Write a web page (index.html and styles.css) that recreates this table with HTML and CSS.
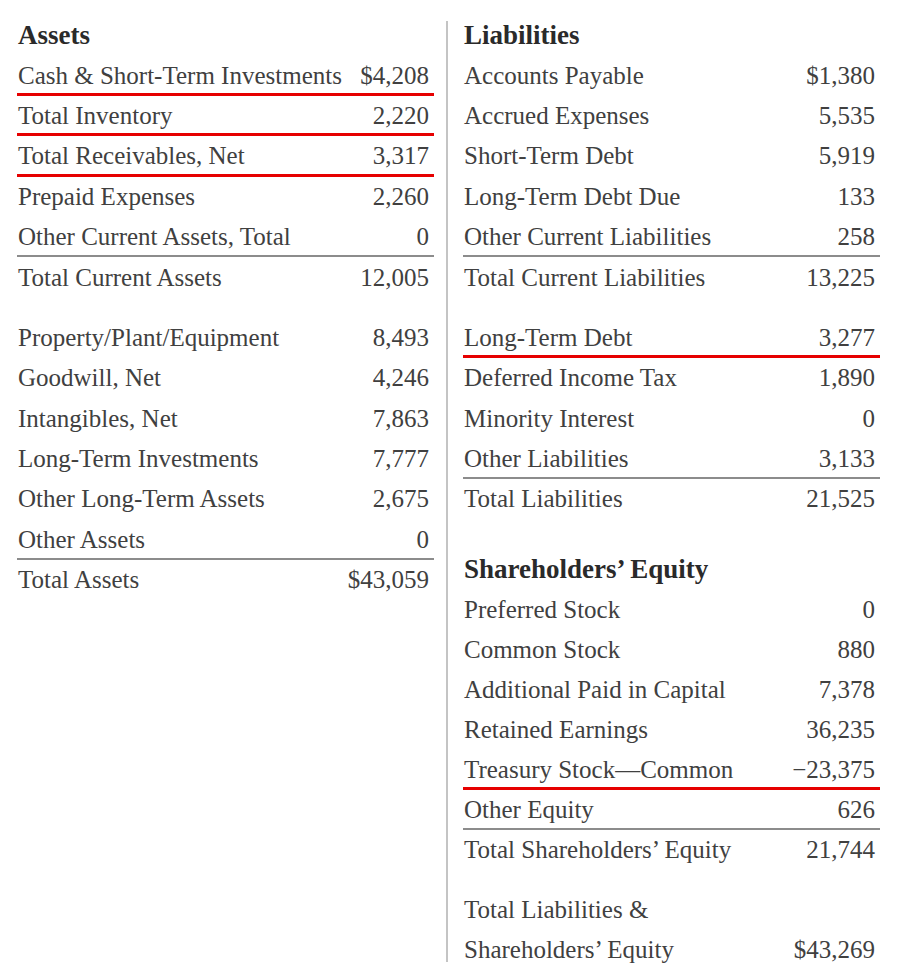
FILE: index.html
```html
<!DOCTYPE html>
<html lang="en">
<head>
<meta charset="utf-8">
<title>Balance Sheet</title>
<link rel="stylesheet" href="styles.css">
</head>
<body>
<main class="sheet">
  <section class="col">
    <div class="row head">Assets</div>
    <div class="row red"><span class="label">Cash &amp; Short-Term Investments</span><span class="amt">$4,208</span></div>
    <div class="row red"><span class="label">Total Inventory</span><span class="amt">2,220</span></div>
    <div class="row red"><span class="label">Total Receivables, Net</span><span class="amt">3,317</span></div>
    <div class="row"><span class="label">Prepaid Expenses</span><span class="amt">2,260</span></div>
    <div class="row rule"><span class="label">Other Current Assets, Total</span><span class="amt">0</span></div>
    <div class="row"><span class="label">Total Current Assets</span><span class="amt">12,005</span></div>
    <div class="spacer"></div>
    <div class="row"><span class="label">Property/Plant/Equipment</span><span class="amt">8,493</span></div>
    <div class="row"><span class="label">Goodwill, Net</span><span class="amt">4,246</span></div>
    <div class="row"><span class="label">Intangibles, Net</span><span class="amt">7,863</span></div>
    <div class="row"><span class="label">Long-Term Investments</span><span class="amt">7,777</span></div>
    <div class="row"><span class="label">Other Long-Term Assets</span><span class="amt">2,675</span></div>
    <div class="row rule"><span class="label">Other Assets</span><span class="amt">0</span></div>
    <div class="row"><span class="label">Total Assets</span><span class="amt">$43,059</span></div>
  </section>
  <div class="divider"></div>
  <section class="col">
    <div class="row head">Liabilities</div>
    <div class="row"><span class="label">Accounts Payable</span><span class="amt">$1,380</span></div>
    <div class="row"><span class="label">Accrued Expenses</span><span class="amt">5,535</span></div>
    <div class="row"><span class="label">Short-Term Debt</span><span class="amt">5,919</span></div>
    <div class="row"><span class="label">Long-Term Debt Due</span><span class="amt">133</span></div>
    <div class="row rule"><span class="label">Other Current Liabilities</span><span class="amt">258</span></div>
    <div class="row"><span class="label">Total Current Liabilities</span><span class="amt">13,225</span></div>
    <div class="spacer"></div>
    <div class="row red"><span class="label">Long-Term Debt</span><span class="amt">3,277</span></div>
    <div class="row"><span class="label">Deferred Income Tax</span><span class="amt">1,890</span></div>
    <div class="row"><span class="label">Minority Interest</span><span class="amt">0</span></div>
    <div class="row rule"><span class="label">Other Liabilities</span><span class="amt">3,133</span></div>
    <div class="row"><span class="label">Total Liabilities</span><span class="amt">21,525</span></div>
    <div class="spacer wide"></div>
    <div class="row head">Shareholders’ Equity</div>
    <div class="row eq"><span class="label">Preferred Stock</span><span class="amt">0</span></div>
    <div class="row eq"><span class="label">Common Stock</span><span class="amt">880</span></div>
    <div class="row eq"><span class="label">Additional Paid in Capital</span><span class="amt">7,378</span></div>
    <div class="row eq"><span class="label">Retained Earnings</span><span class="amt">36,235</span></div>
    <div class="row eq red"><span class="label">Treasury Stock—Common</span><span class="amt">−23,375</span></div>
    <div class="row eq rule"><span class="label">Other Equity</span><span class="amt">626</span></div>
    <div class="row eq"><span class="label">Total Shareholders’ Equity</span><span class="amt">21,744</span></div>
    <div class="spacer"></div>
    <div class="row double"><span class="label">Total Liabilities &amp;<br>Shareholders’ Equity</span><span class="amt">$43,269</span></div>
  </section>
</main>
</body>
</html>
```

FILE: styles.css
```css
html, body {
  margin: 0;
  padding: 0;
  background: #ffffff;
}

body {
  font-family: "Liberation Serif", "Times New Roman", serif;
  color: #404040;
  font-size: 25px;
}

.sheet {
  display: flex;
  align-items: flex-start;
  padding: 15px 0 0 17px;
}

.col {
  width: 417px;
  display: flex;
  flex-direction: column;
}

.divider {
  width: 2px;
  height: 941px;
  margin: 6px 15px 0 12px;
  background: #c4c4c4;
}

.row {
  box-sizing: border-box;
  height: 40.4px;
  display: flex;
  align-items: center;
  justify-content: space-between;
  padding: 0 5px 0 1px;
  white-space: nowrap;
}

.row.eq {
  height: 40px;
}

.row.head {
  font-weight: bold;
  font-size: 27px;
  color: #2a2a2a;
}

.row.red {
  border-bottom: 3px solid #e60000;
  padding-top: 3px;
}

.row.rule {
  border-bottom: 2px solid #8c8c8c;
  padding-top: 2px;
}

.row.double {
  height: 80px;
  align-items: flex-end;
  line-height: 40px;
}

.spacer {
  height: 20px;
}

.spacer.wide {
  height: 30px;
}
```
